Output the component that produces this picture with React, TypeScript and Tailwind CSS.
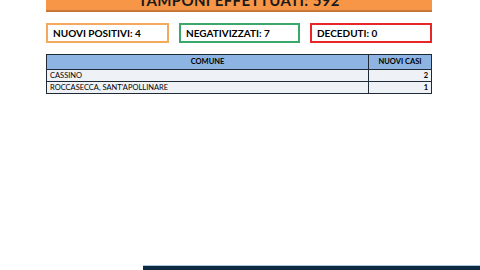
export default function App() {
  const rows = [
    { comune: "CASSINO", casi: 2 },
    { comune: "ROCCASECCA, SANT'APOLLINARE", casi: 1 },
  ];

  return (
    <div className="flex h-[270px] w-[480px] flex-col overflow-hidden bg-white font-['Lato','Open_Sans',sans-serif] text-black">
      <div className="ml-[46px] w-[386px]">
        {/* totale tamponi */}
        <div className="-mt-[14px] flex h-[26px] items-end justify-center border-b-2 border-[#c5783a] bg-[#f79646] pb-[1px] text-[15px] leading-[18px] font-bold tracking-wide text-[#1a1a1a]">
          TAMPONI EFFETTUATI: 592
        </div>

        <div className="mt-[11px] flex gap-[10px]">
          <div className="flex h-[20px] w-[123px] items-center border-2 border-[#f5a95c] px-[5px] text-[10px] font-bold">
            NUOVI POSITIVI: 4
          </div>
          <div className="flex h-[20px] w-[121px] items-center border-2 border-[#3aa86b] px-[5px] text-[10px] font-bold">
            NEGATIVIZZATI: 7
          </div>
          <div className="flex h-[20px] flex-1 items-center border-2 border-[#e8262a] px-[5px] text-[10px] font-bold">
            DECEDUTI: 0
          </div>
        </div>

        <table className="mt-[11px] w-full border-collapse text-[7.5px]">
          <thead>
            <tr className="h-[15px] bg-[#8db4e2]">
              <th className="border border-[#1f2a36] font-bold">COMUNE</th>
              <th className="w-[63px] border border-[#1f2a36] font-bold">NUOVI CASI</th>
            </tr>
          </thead>
          <tbody>
            {rows.map((r) => (
              <tr key={r.comune} className="h-[12px] bg-[#eef1f6]">
                <td className="border border-[#1f2a36] px-[3px] leading-none">{r.comune}</td>
                <td className="border border-[#1f2a36] px-[3px] text-right font-bold leading-none">{r.casi}</td>
              </tr>
            ))}
          </tbody>
        </table>
      </div>

      <div className="mt-auto ml-[143px] h-[5px] border-t border-[#a9c7dc] bg-[#0e2a42]" />
    </div>
  );
}
